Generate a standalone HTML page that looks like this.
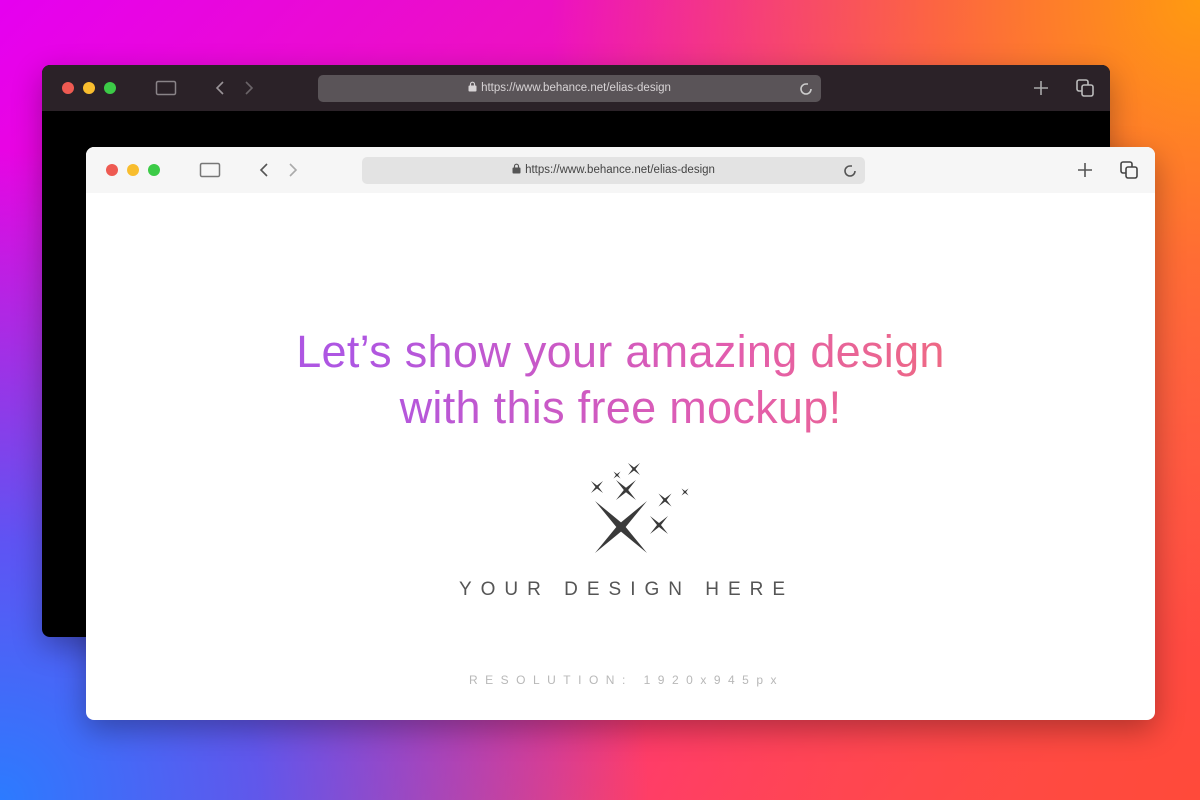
<!DOCTYPE html><html><head><style>
*{margin:0;padding:0;box-sizing:border-box}
body{width:1200px;height:800px;overflow:hidden;position:relative;font-family:"Liberation Sans",sans-serif;
background:
radial-gradient(circle at 100% 0%,#ff9a10 0,rgba(255,120,40,.8) 18%,rgba(255,80,80,0) 45%),
radial-gradient(circle at 0% 100%,#2c7bff 0,rgba(60,100,255,.8) 18%,rgba(120,60,255,0) 45%),
radial-gradient(circle at 100% 100%,#ff4a3a 0,rgba(255,60,80,0) 45%),
linear-gradient(135deg,#e600f0 0%,#f01aa8 45%,#ff3a70 70%,#ff5050 100%)}
.win{position:absolute;border-radius:8px;overflow:hidden}
.bar{position:absolute;left:0;right:0;top:0;height:46px}
.dot{position:absolute;top:17px;width:12px;height:12px;border-radius:50%}
.url{position:absolute;height:27px;border-radius:5px;font-size:11.5px;text-align:center;line-height:27px}
.ic{position:absolute}
</style></head><body>
<div class="win" style="left:42px;top:65px;width:1068px;height:572px;background:#000;box-shadow:0 10px 30px rgba(0,0,0,.3)">
<div class="bar" style="background:#2b2228">
<div class="dot" style="left:20px;background:#ee5a52"></div><div class="dot" style="left:41px;background:#f8bd2e"></div><div class="dot" style="left:62px;background:#3ccb47"></div>
<svg class="ic" style="left:113px;top:14px" width="22" height="18"><rect x="1.5" y="2.5" width="19" height="13" rx="1.5" fill="none" stroke="#8a8488" stroke-width="1.5"/></svg>
<svg class="ic" style="left:172px;top:14px" width="50" height="18" fill="none" stroke-width="1.6"><path d="M9 3 L3 9 L9 15" stroke="#9a9498"/><path d="M32 3 L38 9 L32 15" stroke="#6a6468"/></svg>
<div class="url" style="left:276px;top:10px;width:503px;background:#5a5458;color:#d8d4d6"><svg width="9" height="11" style="vertical-align:-1px;margin-right:4px"><rect x="0.5" y="4.5" width="8" height="6" rx="1" fill="#d8d4d6"/><path d="M2.5 5V3.2a2 2 0 0 1 4 0V5" fill="none" stroke="#d8d4d6" stroke-width="1.2"/></svg>https://www.behance.net/elias-design
<svg style="position:absolute;right:6px;top:5px" width="18" height="18" fill="none" stroke="#ccc" stroke-width="1.6"><path d="M14 9 A5 5 0 1 1 9 4 L11 4"/></svg></div>
<svg class="ic" style="left:990px;top:14px" width="18" height="18" stroke="#aaa" stroke-width="1.6"><path d="M9 2V16M2 9H16"/></svg>
<svg class="ic" style="left:1033px;top:13px" width="20" height="20" fill="none" stroke="#bbb" stroke-width="1.6"><rect x="2" y="2" width="11" height="11" rx="2"/><rect x="7" y="7" width="11" height="11" rx="2" fill="#2b2228"/></svg>
</div></div>
<div class="win" style="left:86px;top:147px;width:1069px;height:573px;background:#fff;box-shadow:0 10px 30px rgba(0,0,0,.3)">
<div class="bar" style="background:#f6f6f6">
<div class="dot" style="left:20px;background:#ee5a52"></div><div class="dot" style="left:41px;background:#f8bd2e"></div><div class="dot" style="left:62px;background:#3ccb47"></div>
<svg class="ic" style="left:113px;top:14px" width="22" height="18"><rect x="1.5" y="2.5" width="19" height="13" rx="1.5" fill="none" stroke="#777" stroke-width="1.5"/></svg>
<svg class="ic" style="left:172px;top:14px" width="50" height="18" fill="none" stroke-width="1.6"><path d="M9 3 L3 9 L9 15" stroke="#555"/><path d="M32 3 L38 9 L32 15" stroke="#aaa"/></svg>
<div class="url" style="left:276px;top:10px;width:503px;background:#e3e3e3;color:#444"><svg width="9" height="11" style="vertical-align:-1px;margin-right:4px"><rect x="0.5" y="4.5" width="8" height="6" rx="1" fill="#555"/><path d="M2.5 5V3.2a2 2 0 0 1 4 0V5" fill="none" stroke="#555" stroke-width="1.2"/></svg>https://www.behance.net/elias-design
<svg style="position:absolute;right:6px;top:5px" width="18" height="18" fill="none" stroke="#555" stroke-width="1.6"><path d="M14 9 A5 5 0 1 1 9 4 L11 4"/></svg></div>
<svg class="ic" style="left:990px;top:14px" width="18" height="18" stroke="#555" stroke-width="1.6"><path d="M9 2V16M2 9H16"/></svg>
<svg class="ic" style="left:1033px;top:13px" width="20" height="20" fill="none" stroke="#444" stroke-width="1.6"><rect x="2" y="2" width="11" height="11" rx="2"/><rect x="7" y="7" width="11" height="11" rx="2" fill="#f6f6f6"/></svg>
</div>
<div style="position:absolute;left:0;right:0;top:177px;text-align:center;font-size:45px;line-height:56px;font-weight:300;letter-spacing:.3px;background:linear-gradient(90deg,#a848e0 25%,#e050a8 60%,#f06070 85%);-webkit-background-clip:text;background-clip:text;color:transparent;opacity:.92">Let’s show your amazing design<br>with this free mockup!</div>
<svg style="position:absolute;left:0;top:0" width="1069" height="573"><g fill="#3a3a3a">
<path d="M-1-1L0-.18L1-1L.18 0L1 1L0 .18L-1 1L-.18 0Z" transform="translate(535 380) scale(26)"/>
<path d="M-1-1L0-.22L1-1L.22 0L1 1L0 .22L-1 1L-.22 0Z" transform="translate(540 343) scale(10)"/>
<path d="M-1-1L0-.25L1-1L.25 0L1 1L0 .25L-1 1L-.25 0Z" transform="translate(511 340) scale(6)"/>
<path d="M-1-1L0-.25L1-1L.25 0L1 1L0 .25L-1 1L-.25 0Z" transform="translate(548 322) scale(6)"/>
<path d="M-1-1L0-.3L1-1L.3 0L1 1L0 .3L-1 1L-.3 0Z" transform="translate(531 328) scale(3.5)"/>
<path d="M-1-1L0-.25L1-1L.25 0L1 1L0 .25L-1 1L-.25 0Z" transform="translate(579 353) scale(6.5)"/>
<path d="M-1-1L0-.22L1-1L.22 0L1 1L0 .22L-1 1L-.22 0Z" transform="translate(573 378) scale(9)"/>
<path d="M-1-1L0-.3L1-1L.3 0L1 1L0 .3L-1 1L-.3 0Z" transform="translate(599 345) scale(3.5)"/>
</g></svg>
<div style="position:absolute;left:0;right:0;top:432px;text-align:center;font-size:19px;letter-spacing:9px;color:#555;padding-left:12px">YOUR DESIGN HERE</div>
<div style="position:absolute;left:0;right:0;top:526px;text-align:center;font-size:12px;letter-spacing:7.5px;color:#b8b8b8;padding-left:12px">RESOLUTION: 1920x945px</div>
</div>
</body></html>
